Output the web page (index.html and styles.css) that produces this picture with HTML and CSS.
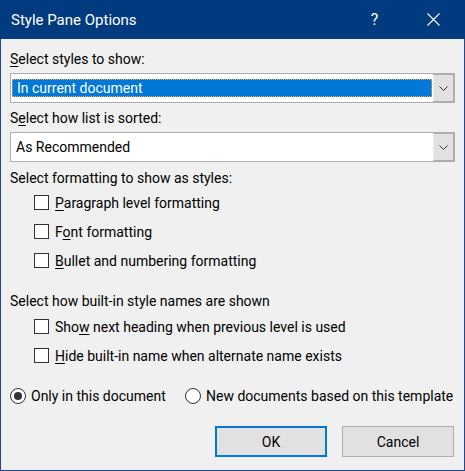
FILE: index.html
```html
<!DOCTYPE html>
<html>
<head>
<meta charset="utf-8">
<link rel="stylesheet" href="styles.css">
</head>
<body>
<div class="window">
  <div class="titlebar">
    <span class="title">Style Pane Options</span>
    <span class="cap help">?</span>
    <span class="cap close"><svg width="13" height="13" viewBox="0 0 13 13"><path d="M0.5 0.5 L12.5 12.5 M12.5 0.5 L0.5 12.5" stroke="#fff" stroke-width="1.1" fill="none"/></svg></span>
  </div>
  <div class="content">
    <div class="label first"><u>S</u>elect styles to show:</div>
    <div class="combo">
      <div class="field"><span class="sel">In current document</span></div>
      <div class="drop"><svg width="9" height="5" viewBox="0 0 9 5"><polyline points="0.5,0.5 4.5,4.5 8.5,0.5" stroke="#333" stroke-width="1" fill="none"/></svg></div>
    </div>
    <div class="label">S<u>e</u>lect how list is sorted:</div>
    <div class="combo">
      <div class="field"><span class="val">As Recommended</span></div>
      <div class="drop"><svg width="9" height="5" viewBox="0 0 9 5"><polyline points="0.5,0.5 4.5,4.5 8.5,0.5" stroke="#333" stroke-width="1" fill="none"/></svg></div>
    </div>
    <div class="label l3">Select formatting to show as styles:</div>
    <div class="checks">
      <div class="check"><span class="box"></span><span><u>P</u>aragraph level formatting</span></div>
      <div class="check"><span class="box"></span><span>F<u>o</u>nt formatting</span></div>
      <div class="check"><span class="box"></span><span><u>B</u>ullet and numbering formatting</span></div>
    </div>
    <div class="label l4">Select how built-in style names are shown</div>
    <div class="checks c2">
      <div class="check"><span class="box"></span><span>Sho<u>w</u> next heading when previous level is used</span></div>
      <div class="check"><span class="box"></span><span><u>H</u>ide built-in name when alternate name exists</span></div>
    </div>
    <div class="radios">
      <div class="radio"><span class="dot on"></span><span>Only in this document</span></div>
      <div class="radio"><span class="dot"></span><span>New documents based on this template</span></div>
    </div>
    <div class="buttons">
      <div class="btn default">OK</div>
      <div class="btn">Cancel</div>
    </div>
  </div>
</div>
</body>
</html>
```
FILE: styles.css
```css
html, body {
  margin: 0;
  padding: 0;
  background: #f0f0f0;
}
body {
  font-family: Roboto, "Open Sans", sans-serif;
  font-size: 14px;
  line-height: 20px;
  color: #000;
}
u {
  text-decoration: underline;
  text-underline-offset: 2px;
  text-decoration-thickness: 1px;
}
.window {
  width: 465px;
  height: 471px;
  box-sizing: border-box;
  border: 1px solid #1c4a94;
  border-top: none;
  background: #f0f0f0;
  display: flex;
  flex-direction: column;
}
.titlebar {
  height: 39px;
  flex: none;
  background: #003a7f;
  color: #fff;
  display: flex;
  align-items: center;
  margin: 0 -1px;
  padding-left: 11px;
}
.title {
  flex: 1;
  font-size: 15px;
}
.cap {
  display: flex;
  align-items: center;
  justify-content: center;
  height: 39px;
}
.help {
  width: 55px;
  font-size: 16px;
}
.close {
  width: 62px;
  margin-right: 1px;
}
.content {
  padding: 10px 9px 0 9px;
  display: flex;
  flex-direction: column;
}
.label {
  height: 20px;
  margin-top: 5px;
}
.label.first {
  margin-top: 0;
}
.label.l3 {
  margin-top: 6px;
}
.label.l4 {
  margin-top: 16px;
}
.combo {
  margin-top: 4px;
  height: 30px;
  box-sizing: border-box;
  border: 1px solid #adadad;
  background: #fff;
  display: flex;
}
.combo .field {
  flex: 1;
  display: flex;
  align-items: center;
  padding: 0 1px;
}
.sel {
  flex: 1;
  height: 18px;
  line-height: 16px;
  background: #0078d7;
  color: #fff;
  padding-left: 4px;
  box-sizing: border-box;
  border: 1px dotted #f0a050;
}
.val {
  padding-left: 4px;
}
.drop {
  width: 21px;
  box-sizing: border-box;
  background: #e1e1e1;
  border-left: 1px solid #ececec;
  border-right: 1px solid #adadad;
  border-top: 1px solid #adadad;
  border-bottom: 1px solid #adadad;
  display: flex;
  align-items: center;
  justify-content: center;
}
.checks {
  display: flex;
  flex-direction: column;
}
.checks.c2 {
  margin-top: 1px;
}
.check {
  height: 29px;
  display: flex;
  align-items: center;
  padding-left: 24px;
}
.box {
  width: 15px;
  height: 15px;
  box-sizing: border-box;
  border: 1px solid #333;
  background: #fff;
  margin-right: 6px;
  flex: none;
}
.radios {
  margin-top: 16px;
  display: grid;
  grid-template-columns: 175px 1fr;
  height: 20px;
  align-items: center;
}
.radio {
  display: flex;
  align-items: center;
  white-space: nowrap;
}
.dot {
  width: 16px;
  height: 16px;
  box-sizing: border-box;
  border: 1px solid #333;
  border-radius: 50%;
  background: #fff;
  margin-right: 5px;
  flex: none;
  display: flex;
  align-items: center;
  justify-content: center;
}
.dot.on::after {
  content: "";
  width: 8px;
  height: 8px;
  border-radius: 50%;
  background: #333;
}
.buttons {
  margin-top: 20px;
  display: flex;
  justify-content: flex-end;
  gap: 15px;
  padding-right: 1px;
}
.btn {
  width: 112px;
  height: 31px;
  box-sizing: border-box;
  background: #e1e1e1;
  border: 1px solid #adadad;
  display: flex;
  align-items: center;
  justify-content: center;
}
.btn.default {
  border: 2px solid #0078d7;
}
```
